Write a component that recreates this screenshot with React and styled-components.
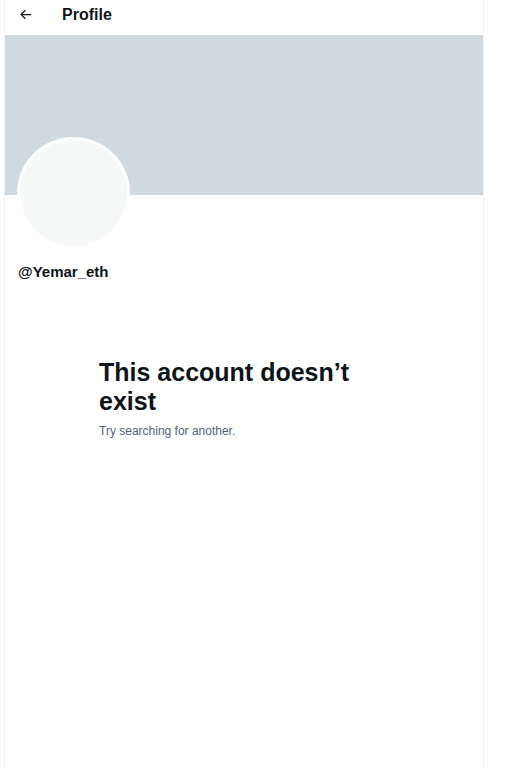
import React from "react";
import styled, { createGlobalStyle } from "styled-components";

const Global = createGlobalStyle`
  html, body { margin: 0; padding: 0; background: #ffffff; }
  body { font-family: "Liberation Sans", Arial, sans-serif; color: #0f1419; }
`;

const Column = styled.main`
  box-sizing: border-box;
  width: 480px;
  min-height: 769px;
  margin-left: 4px;
  border-left: 1px solid #eff3f4;
  border-right: 1px solid #eff3f4;
  display: flex;
  flex-direction: column;
`;

const Header = styled.header`
  box-sizing: border-box;
  height: 35px;
  display: flex;
  align-items: center;
  padding: 0 0 6px 13px;
  gap: 29px;
`;

const BackButton = styled.button`
  width: 15px;
  height: 15px;
  padding: 0;
  border: 0;
  background: none;
  display: flex;
  align-items: center;
  justify-content: center;
  color: #0f1419;
  cursor: pointer;
`;

const Title = styled.h2`
  margin: 0;
  font-size: 16px;
  font-weight: 700;
  line-height: 20px;
`;

const Banner = styled.div`
  height: 160px;
  background: #cfd9de;
`;

const Avatar = styled.div`
  box-sizing: border-box;
  width: 113px;
  height: 112px;
  margin: -58px 0 0 12px;
  border-radius: 50%;
  border: 3px solid #ffffff;
  background: #f7f9f9;
`;

const Handle = styled.div`
  margin: 13px 0 0 13px;
  font-size: 15px;
  font-weight: 700;
  line-height: 20px;
`;

const Message = styled.section`
  margin: 76px 0 0 94px;
  width: 300px;
`;

const Heading = styled.h1`
  margin: 0;
  font-size: 25px;
  font-weight: 700;
  line-height: 29px;
`;

const Sub = styled.p`
  margin: 7px 0 0;
  font-size: 12px;
  line-height: 16px;
  color: #536471;
`;

export default function App() {
  return (
    <>
      <Global />
      <Column>
        <Header>
          <BackButton aria-label="Back">
            <svg viewBox="0 0 24 24" width="15" height="15" fill="currentColor">
              <path d="M7.414 13l5.043 5.04-1.414 1.42L3.586 12l7.457-7.46 1.414 1.42L7.414 11H21v2H7.414z" />
            </svg>
          </BackButton>
          <Title>Profile</Title>
        </Header>
        <Banner />
        <Avatar />
        <Handle>@Yemar_eth</Handle>
        <Message>
          <Heading>This account doesn’t exist</Heading>
          <Sub>Try searching for another.</Sub>
        </Message>
      </Column>
    </>
  );
}
